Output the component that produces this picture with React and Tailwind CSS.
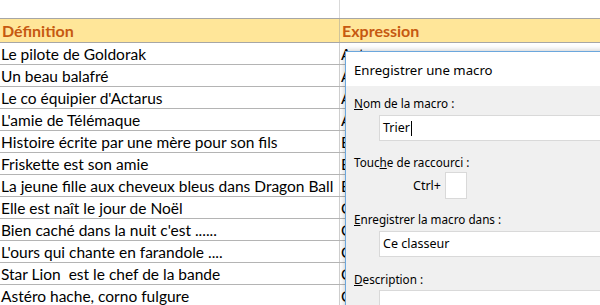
import React from "react";

const rows = [
  ["Le pilote de Goldorak", "Actarus"],
  ["Un beau balafré", "Albator"],
  ["Le co équipier d'Actarus", "Alcor"],
  ["L'amie de Télémaque", "Alice"],
  ["Histoire écrite par une mère pour son fils", "Belle et Sébastien"],
  ["Friskette est son amie", "Bill"],
  ["La jeune fille aux cheveux bleus dans Dragon Ball", "Bulma"],
  ["Elle est naît le jour de Noël", "Candy"],
  ["Bien caché dans la nuit c'est ......", "Capitaine Flam"],
  ["L'ours qui chante en farandole ....", "Colargol"],
  ["Star Lion  est le chef de la bande", "Cosmocats"],
  ["Astéro hache, corno fulgure", "Cornofulgure"],
];

export default function App() {
  return (
    <div className="relative w-[600px] h-[305px] overflow-hidden bg-white text-black font-['Lato',sans-serif] text-[15.5px]">
      <div className="flex h-[18px]">
        <div className="w-[340px] border-r border-[#d9d9d9]" />
        <div className="flex-1" />
      </div>
      <div className="flex h-[25px] bg-[#ffe699] border-y border-[#a6a6a6] font-bold text-[#c65911] text-[16px] leading-[23px]">
        <div className="w-[340px] pl-[2px] border-r border-[#d0c49a]">Définition</div>
        <div className="flex-1 pl-[2px]">Expression</div>
      </div>
      {rows.map(([a, b]) => (
        <div key={a} className="flex h-[22px] border-b border-[#b4b4b4] leading-[22px] whitespace-pre">
          <div className="w-[340px] pl-[1px] border-r border-[#d0d0d0] overflow-hidden">{a}</div>
          <div className="flex-1 pl-[1px]">{b}</div>
        </div>
      ))}

      <div className="absolute left-[345px] top-[51px] w-[300px] h-[300px] border border-[#6ba7dd] bg-[#f0f0f0] font-['Noto_Sans',sans-serif] text-[11.7px] shadow-[0_0_6px_rgba(0,0,0,0.25)]">
        <div className="h-[34px] bg-white pl-[8px] leading-[36px] text-[13.2px]">Enregistrer une macro</div>
        <div className="flex flex-col pl-[8px] leading-[16px]">
          <div className="mt-[9px]"><span className="underline">N</span>om de la macro :</div>
          <div className="mt-[4px] ml-[25px] h-[26px] bg-white border border-[#d9d9d9] flex items-center pl-[3px] text-[12.5px]">
            Trier<span className="inline-block w-[1px] h-[15px] bg-black ml-[1px]" />
          </div>
          <div className="mt-[13px]">Touc<span className="underline">h</span>e de raccourci :</div>
          <div className="mt-[2px] flex items-center">
            <span className="ml-[59px] text-[12.5px]">Ctrl+</span>
            <div className="ml-[4px] w-[22px] h-[27px] bg-white border border-[#d9d9d9]" />
          </div>
          <div className="mt-[12px]"><span className="underline">E</span>nregistrer la macro dans :</div>
          <div className="mt-[4px] ml-[25px] h-[26px] bg-white border border-[#d9d9d9] flex items-center pl-[3px] text-[12.5px]">Ce classeur</div>
          <div className="mt-[14px]"><span className="underline">D</span>escription :</div>
          <div className="mt-[3px] ml-[25px] h-[60px] bg-white border border-[#d9d9d9]" />
        </div>
      </div>
    </div>
  );
}
